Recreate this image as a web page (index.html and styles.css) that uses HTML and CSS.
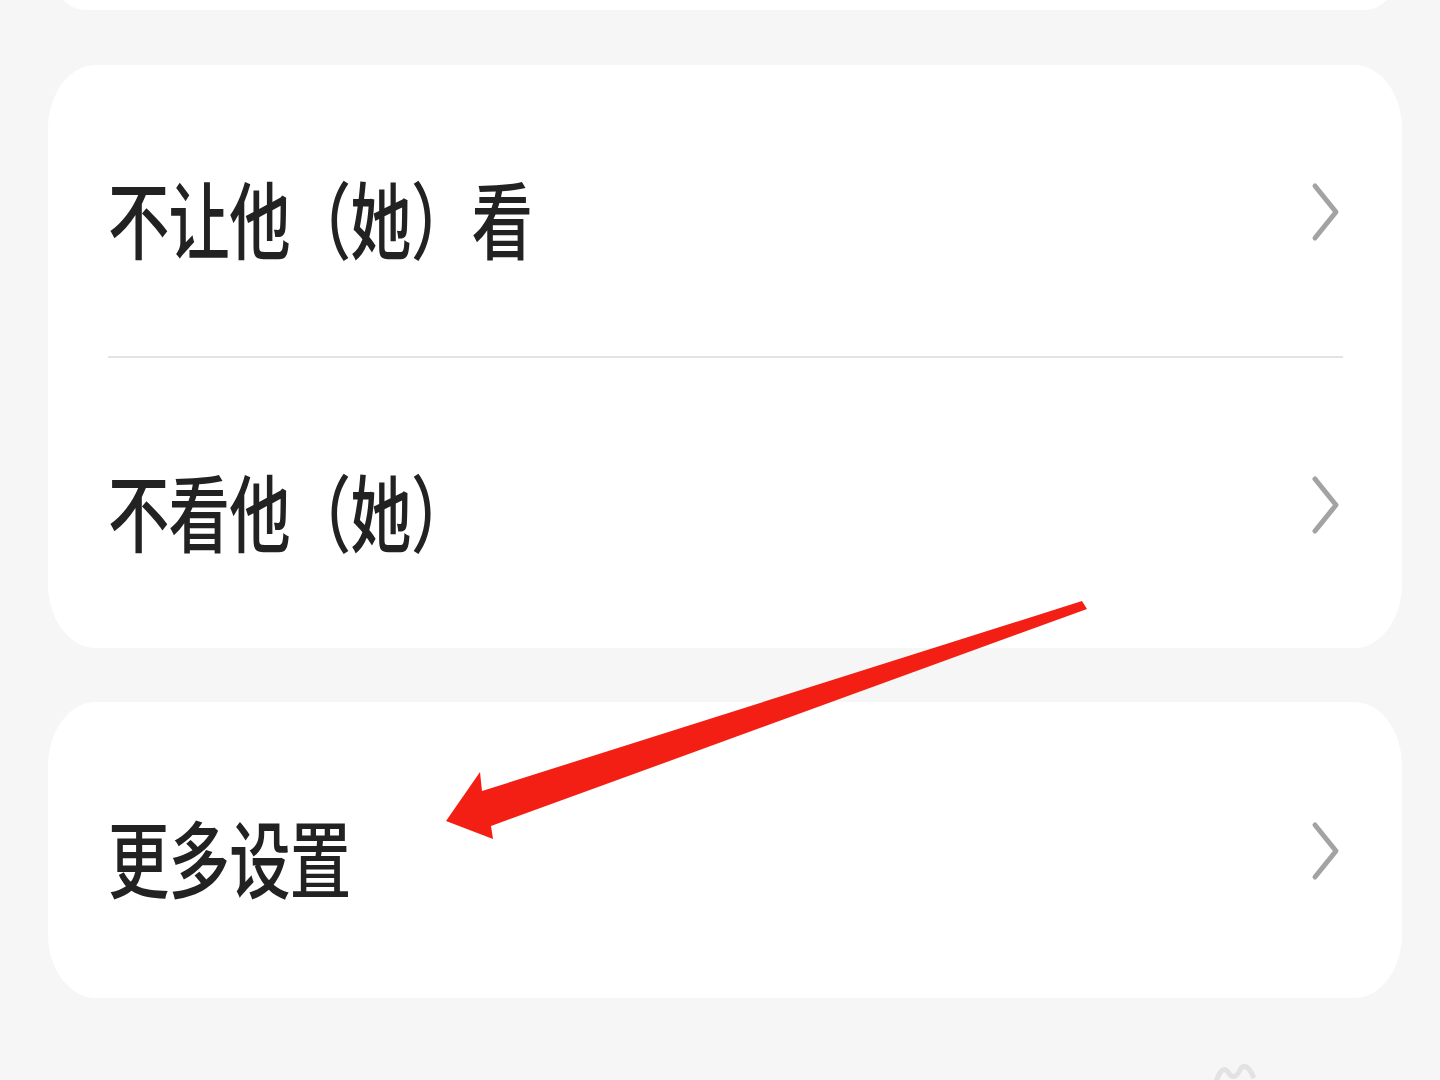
FILE: index.html
```html
<!DOCTYPE html>
<html lang="zh-CN">
<head>
<meta charset="utf-8">
<title>设置</title>
<link rel="stylesheet" href="styles.css">
</head>
<body>
<div class="screen">
  <div class="card card-top"></div>

  <div class="card card-main">
    <div class="row row-1">
      <span class="label">不让他（她）看</span>
      <svg class="chev" viewBox="0 0 30 60" width="30" height="60"><polyline points="5,4 26,30 5,56" /></svg>
    </div>
    <div class="divider"></div>
    <div class="row row-2">
      <span class="label">不看他（她）</span>
      <svg class="chev" viewBox="0 0 30 60" width="30" height="60"><polyline points="5,4 26,30 5,56" /></svg>
    </div>
  </div>

  <div class="card card-more">
    <div class="row row-3">
      <span class="label">更多设置</span>
      <svg class="chev" viewBox="0 0 30 60" width="30" height="60"><polyline points="5,4 26,30 5,56" /></svg>
    </div>
  </div>

  <svg class="wm" viewBox="0 0 50 24" width="50" height="24"><path d="M4 24 Q10 6 16 14 Q22 24 28 12 Q34 2 42 20" /></svg>

  <svg class="arrow" viewBox="0 0 1440 1080" width="1440" height="1080">
    <polygon points="1082,601 1087,609 491,826 493,839 446,821 480,772 482,791" />
  </svg>
</div>
</body>
</html>
```
FILE: styles.css
```css
html, body {
  margin: 0;
  padding: 0;
}
body {
  background: #f6f6f6;
  font-family: "Noto Sans CJK SC", "Noto Sans", sans-serif;
  color: #222222;
}
.screen {
  position: relative;
  width: 1440px;
  height: 1080px;
  overflow: hidden;
  box-sizing: border-box;
  padding: 0 38px 0 48px;
}
.card {
  background: #ffffff;
  border-radius: 48px / 64px;
}
.card-top {
  height: 100px;
  margin-top: -90px;
}
.card-main {
  margin-top: 55px;
  height: 583px;
  display: flex;
  flex-direction: column;
}
.card-more {
  margin-top: 54px;
  height: 296px;
  display: flex;
  flex-direction: column;
}
.row {
  flex: 1;
  display: flex;
  align-items: center;
  justify-content: space-between;
  padding: 0 60px 0 60px;
}
.row-1 { padding-top: 4px; }
.row-2 { padding-top: 4px; }
.row-3 { padding-top: 2px; }
.label {
  display: inline-block;
  font-size: 84px;
  font-weight: 500;
  line-height: 1;
  white-space: nowrap;
  transform: scaleX(0.73);
  transform-origin: left center;
  margin-top: 10px;
  letter-spacing: -1px;
}
.divider {
  height: 2px;
  background: #e3e3e3;
  margin: 0 59px 0 60px;
}
.chev {
  display: block;
  margin-right: 2px;
}
.chev polyline {
  fill: none;
  stroke: #a3a3a3;
  stroke-width: 5;
  stroke-linecap: round;
  stroke-linejoin: round;
}
.wm {
  position: absolute;
  left: 1212px;
  top: 1058px;
}
.wm path {
  fill: none;
  stroke: #e2e2e2;
  stroke-width: 5;
}
.arrow {
  position: absolute;
  left: 0;
  top: 0;
  pointer-events: none;
}
.arrow polygon {
  fill: #f41f14;
}
```
